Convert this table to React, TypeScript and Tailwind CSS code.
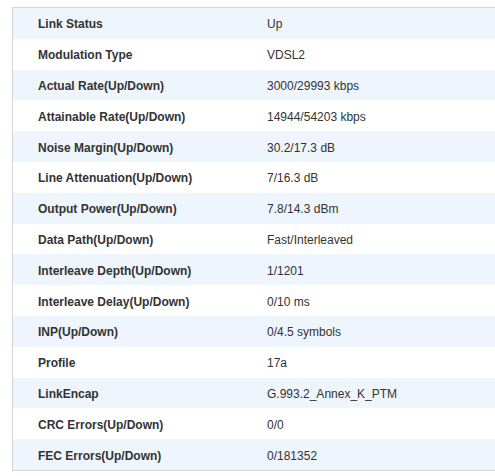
import React from 'react';

const rows: [string, string][] = [
  ['Link Status', 'Up'],
  ['Modulation Type', 'VDSL2'],
  ['Actual Rate(Up/Down)', '3000/29993 kbps'],
  ['Attainable Rate(Up/Down)', '14944/54203 kbps'],
  ['Noise Margin(Up/Down)', '30.2/17.3 dB'],
  ['Line Attenuation(Up/Down)', '7/16.3 dB'],
  ['Output Power(Up/Down)', '7.8/14.3 dBm'],
  ['Data Path(Up/Down)', 'Fast/Interleaved'],
  ['Interleave Depth(Up/Down)', '1/1201'],
  ['Interleave Delay(Up/Down)', '0/10 ms'],
  ['INP(Up/Down)', '0/4.5 symbols'],
  ['Profile', '17a'],
  ['LinkEncap', 'G.993.2_Annex_K_PTM'],
  ['CRC Errors(Up/Down)', '0/0'],
  ['FEC Errors(Up/Down)', '0/181352'],
];

const App: React.FC = () => {
  return (
    <div className="w-[495px] h-[476px] overflow-hidden bg-white pt-[7px] pl-[12px] font-['Liberation_Sans',Arial,sans-serif] text-[12px] text-[#333]">
      <div className="w-[520px] border-t border-l border-b border-[#d4d4d4]">
        {rows.map(([label, value], i) => (
          <div
            key={label}
            className={`flex items-center h-[30.8px] pt-[2px] ${i % 2 === 0 ? 'bg-[#eef5fc]' : 'bg-white'}`}
          >
            <div className="w-[228px] pl-[25px] font-bold">{label}</div>
            <div className="flex-1 pl-[26px]">{value}</div>
          </div>
        ))}
      </div>
    </div>
  );
};

export default App;
